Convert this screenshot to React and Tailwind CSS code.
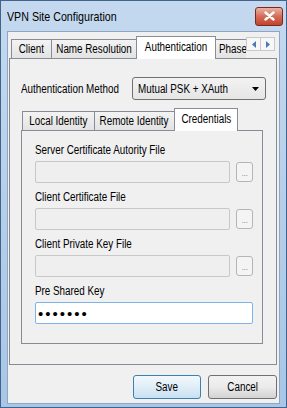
import React from "react";

function T({ children, left, className = "" }) {
  return (
    <span
      className={
        "inline-block whitespace-nowrap scale-x-[0.82] " +
        (left ? "origin-left " : "origin-center ") +
        className
      }
    >
      {children}
    </span>
  );
}

function DotsBtn() {
  return (
    <div className="w-[17px] h-[20px] shrink-0 rounded-[3px] border border-[#b5b5b5] bg-[#f4f4f4] flex items-end justify-center pb-[3px]">
      <span className="text-[9px] leading-none text-[#9a9a9a] tracking-[-0.5px]">...</span>
    </div>
  );
}

function FileRow({ label }) {
  return (
    <div className="flex flex-col">
      <div className="h-[14px] leading-[14px] mb-[4px] text-[12px] text-black">
        <T left>{label}</T>
      </div>
      <div className="flex items-center gap-[6px]">
        <div className="w-[195px] h-[22px] border border-[#c8c8c8] rounded-[2px] bg-[#efefef]" />
        <DotsBtn />
      </div>
    </div>
  );
}

const tabCls =
  "h-[19px] border border-b-0 border-[#898c95] bg-linear-to-b from-[#f3f3f3] to-[#e3e3e3] text-[12px] flex items-center justify-center overflow-hidden";

export default function App() {
  return (
    <div className="w-[287px] h-[408px] flex flex-col border border-[#41638c] bg-linear-to-b from-[#c4d9ef] via-[#b6cfe9] to-[#a8c6e6] font-['Liberation_Sans',Arial,sans-serif] text-black overflow-hidden">
      {/* Title bar */}
      <div className="h-[30px] shrink-0 flex items-center justify-between pl-[6px] pr-[3px]">
        <span className="text-[13px] leading-none">
          <T left>VPN Site Configuration</T>
        </span>
        <div className="w-[28px] h-[19px] rounded-[3px] border border-[#7a2a1c] bg-linear-to-b from-[#eab2a4] via-[#d46b56] to-[#c2432c] flex items-center justify-center">
          <svg width="11" height="10" viewBox="0 0 11 10">
            <path d="M1.5 1.5 L9.5 8.5 M9.5 1.5 L1.5 8.5" stroke="#ffffff" strokeWidth="2.4" strokeLinecap="round" />
          </svg>
        </div>
      </div>

      {/* Client area */}
      <div className="flex-1 mx-[6px] mb-[3px] border border-[#8ea6c4] bg-[#f0f0f0] flex flex-col">
        <div className="ml-[1px] mt-[4px] w-[268px] flex flex-col">
          {/* Outer tabs */}
          <div className="flex items-end h-[22px] pl-[2px]">
            <div className={tabCls + " w-[41px]"}><T>Client</T></div>
            <div className={tabCls + " w-[87px] -ml-px"}><T>Name Resolution</T></div>
            <div className="relative z-10 w-[80px] h-[23px] -ml-[2px] -mb-px border border-b-0 border-[#898c95] bg-white text-[12px] flex items-center justify-center pb-[2px]">
              <T>Authentication</T>
            </div>
            <div className="w-[32px] h-[19px] -ml-[2px] border border-b-0 border-r-0 border-[#898c95] bg-linear-to-b from-[#f3f3f3] to-[#e3e3e3] text-[12px] flex items-center pl-[4px] overflow-hidden">
              <T left>Phase 1</T>
            </div>
            <div className="self-start mt-[1px] flex">
              <div className="w-[15px] h-[14px] border border-[#c9c9c9] bg-[#f7f7f7] flex items-center justify-center">
                <svg width="4" height="7" viewBox="0 0 4 7"><path d="M4 0 L0 3.5 L4 7 Z" fill="#4a78b8" /></svg>
              </div>
              <div className="w-[15px] h-[14px] -ml-px border border-[#c9c9c9] bg-[#f7f7f7] flex items-center justify-center">
                <svg width="4" height="7" viewBox="0 0 4 7"><path d="M0 0 L4 3.5 L0 7 Z" fill="#4a78b8" /></svg>
              </div>
            </div>
          </div>

          {/* Outer panel */}
          <div className="h-[307px] border border-[#898c95] bg-[#f0f0f0] pl-[11px] pr-[10px] pt-[18px]">
            <div className="flex items-center">
              <span className="w-[111px] shrink-0 text-[12px]">
                <T left>Authentication Method</T>
              </span>
              <div className="w-[134px] h-[23px] rounded-[3px] border border-[#707070] bg-linear-to-b from-[#f2f2f2] to-[#e6e6e6] flex items-center justify-between pl-[5px] pr-[6px]">
                <span className="text-[12px]"><T left>Mutual PSK + XAuth</T></span>
                <svg width="7" height="4" viewBox="0 0 7 4"><path d="M0 0 L7 0 L3.5 4 Z" fill="#000" /></svg>
              </div>
            </div>

            {/* Inner tabs */}
            <div className="mt-[8px] flex items-end h-[22px] pl-[1px]">
              <div className={tabCls + " w-[73px]"}><T>Local Identity</T></div>
              <div className={tabCls + " w-[81px] -ml-px"}><T>Remote Identity</T></div>
              <div className="relative z-10 w-[64px] h-[23px] -ml-[1px] -mb-px border border-b-0 border-[#898c95] bg-white text-[12px] flex items-center justify-center pb-[2px]">
                <T>Credentials</T>
              </div>
            </div>

            {/* Inner panel */}
            <div className="w-[242px] h-[214px] border border-[#898c95] bg-[#f0f0f0] pl-[13px] pt-[12px] flex flex-col gap-[7px]">
              <FileRow label="Server Certificate Autority File" />
              <FileRow label="Client Certificate File" />
              <FileRow label="Client Private Key File" />
              <div className="flex flex-col">
                <div className="h-[14px] leading-[14px] mb-[4px] text-[12px]">
                  <T left>Pre Shared Key</T>
                </div>
                <div className="w-[218px] h-[22px] border border-[#7eb4ea] rounded-[2px] bg-white flex items-center pl-[2px]">
                  <span className="text-[15px] leading-none tracking-[2px] text-black">•••••••</span>
                </div>
              </div>
            </div>
          </div>
        </div>

        {/* Buttons */}
        <div className="mt-[10px] flex justify-end gap-[7px] pr-[2px]">
          <div className="w-[68px] h-[24px] rounded-[3px] border border-[#3c7fb1] bg-linear-to-b from-[#f2f8fc] via-[#e0eef8] to-[#c8e0f0] text-[12px] flex items-center justify-center">
            <T>Save</T>
          </div>
          <div className="w-[69px] h-[24px] rounded-[3px] border border-[#707070] bg-linear-to-b from-[#f2f2f2] via-[#ebebeb] to-[#d3d3d3] text-[12px] flex items-center justify-center">
            <T>Cancel</T>
          </div>
        </div>
      </div>
    </div>
  );
}
